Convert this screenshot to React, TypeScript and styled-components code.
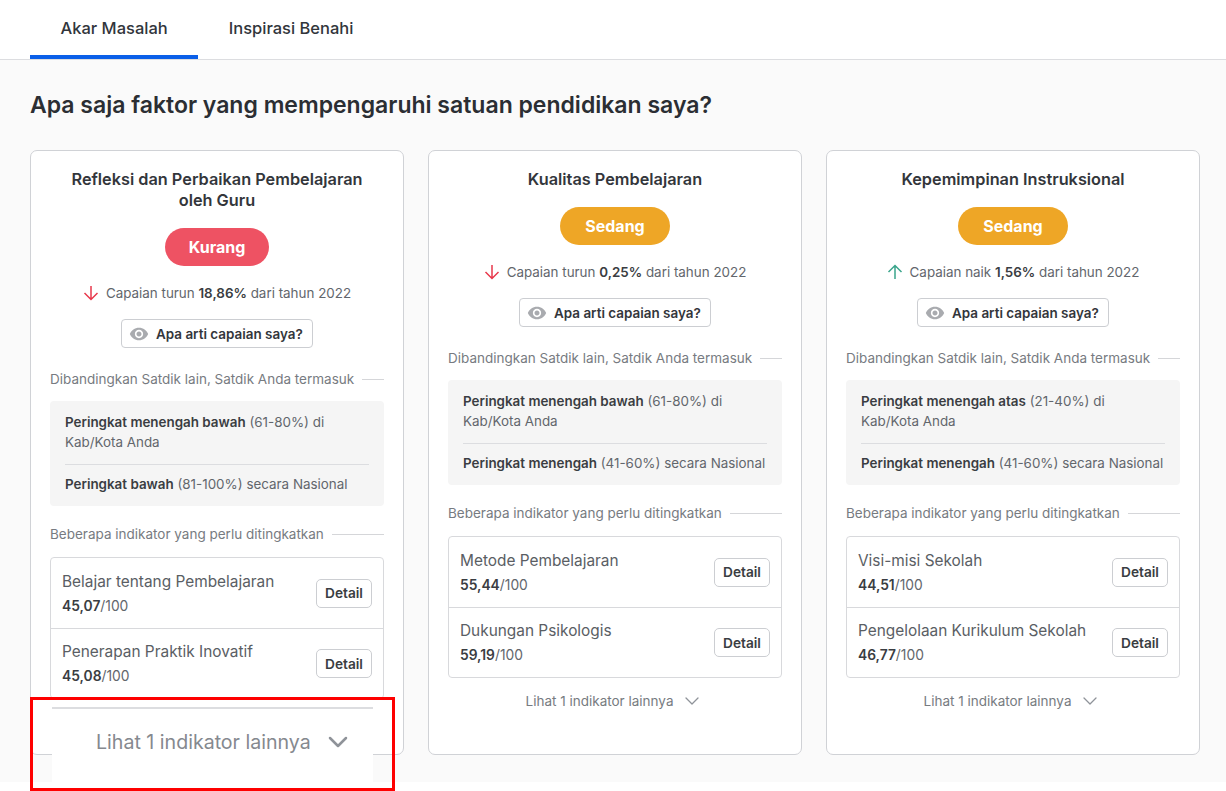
import React from "react";
import styled, { createGlobalStyle } from "styled-components";
import { ChevronDown } from "lucide-react";

const GlobalStyle = createGlobalStyle`
  html, body {
    margin: 0;
    padding: 0;
    background: #fff;
    font-family: Inter, "Noto Sans", sans-serif;
    color: #33363b;
  }
  * {
    box-sizing: border-box;
  }
`;

const Page = styled.div`
  position: relative;
  width: 1226px;
  height: 791px;
  overflow: hidden;
`;

const TabBar = styled.div`
  display: flex;
  height: 60px;
  padding-left: 30px;
  background: #fff;
  border-bottom: 1px solid #dcdde0;
`;

const Tab = styled.div<{ $active?: boolean }>`
  height: 59px;
  padding: 0 30.5px;
  display: flex;
  align-items: center;
  font-size: 16.5px;
  font-weight: 500;
  color: #31353b;
  border-bottom: 4px solid ${(props) => (props.$active ? "#0b5fe8" : "transparent")};
  border-radius: 2px 2px 0 0;
`;

const Main = styled.div`
  height: 722px;
  padding: 30px 26px 0 30px;
  background: #fafafa;
`;

const Heading = styled.h1`
  margin: 0 0 29px;
  font-size: 23px;
  line-height: 31px;
  font-weight: 600;
  color: #2b2e33;
`;

const Cards = styled.div`
  display: grid;
  grid-template-columns: repeat(3, 374px);
  gap: 24px;
`;

const Card = styled.div`
  height: 605px;
  padding: 18px 19px 0;
  background: #fff;
  border: 1px solid #d0d2d6;
  border-radius: 7px;
  overflow: hidden;
  display: flex;
  flex-direction: column;
`;

const CardTitle = styled.h2`
  margin: 0 auto 17px;
  max-width: 310px;
  font-size: 16.3px;
  line-height: 21px;
  font-weight: 600;
  text-align: center;
  color: #33363b;
`;

const Badge = styled.div<{ $tone: string }>`
  align-self: center;
  width: ${(props) => (props.$tone === "red" ? "104px" : "110px")};
  height: 38px;
  border-radius: 20px;
  display: flex;
  align-items: center;
  justify-content: center;
  background: ${(props) => (props.$tone === "red" ? "#ee5263" : "#eea626")};
  color: #fff;
  font-size: 16px;
  font-weight: 700;
`;

const Trend = styled.div`
  margin-top: 17px;
  display: flex;
  align-items: center;
  justify-content: center;
  gap: 7px;
  height: 20px;
  font-size: 13.4px;
  color: #62666c;
  b {
    font-weight: 600;
    color: #3a3d42;
  }
`;

const InfoButton = styled.div`
  align-self: center;
  margin-top: 16px;
  height: 29px;
  width: 192px;
  padding-left: 7px;
  display: flex;
  align-items: center;
  gap: 7px;
  background: #fff;
  border: 1px solid #ccced2;
  border-radius: 4px;
  font-size: 13.45px;
  font-weight: 600;
  color: #33363b;
  white-space: nowrap;
`;

const SectionLabel = styled.div<{ $gap: number }>`
  margin-top: ${(props) => props.$gap}px;
  display: flex;
  align-items: center;
  gap: 8px;
  height: 20px;
  font-size: 13.5px;
  color: #777b81;
  white-space: nowrap;
  &::after {
    content: "";
    flex: 1;
    height: 1px;
    background: #d5d6d9;
  }
`;

const RankBox = styled.div`
  margin-top: 12px;
  height: 105px;
  padding: 12px 15px 0;
  background: #f5f5f5;
  border-radius: 4px;
  font-size: 13.4px;
  line-height: 19.5px;
  color: #62666c;
  b {
    font-weight: 600;
    color: #3a3d42;
  }
`;

const RankRow = styled.div`
  & + & {
    margin-top: 12px;
    padding-top: 10px;
    border-top: 1px solid #dcdde0;
  }
`;

const IndicatorList = styled.div`
  margin-top: 13px;
  border: 1px solid #d8d9dc;
  border-radius: 4px;
`;

const Indicator = styled.div`
  height: 70px;
  padding: 0 11px;
  display: flex;
  align-items: center;
  justify-content: space-between;
  & + & {
    border-top: 1px solid #d8d9dc;
  }
`;

const IndicatorName = styled.div`
  font-size: 15.4px;
  line-height: 22px;
  color: #5a5e64;
`;

const IndicatorScore = styled.div`
  margin-top: 3px;
  font-size: 13.8px;
  line-height: 20px;
  color: #62666c;
  b {
    font-weight: 600;
    color: #3a3d42;
  }
`;

const DetailButton = styled.div`
  width: 56px;
  height: 29px;
  display: flex;
  align-items: center;
  justify-content: center;
  border: 1px solid #ccced2;
  border-radius: 5px;
  font-size: 13.7px;
  font-weight: 600;
  color: #3a3d42;
`;

const MoreRow = styled.div`
  margin-top: 13px;
  display: flex;
  align-items: center;
  justify-content: center;
  gap: 7px;
  height: 20px;
  font-size: 13.5px;
  color: #777b81;
`;

/* the zoomed-in callout pasted over the first card */
const Callout = styled.div`
  position: absolute;
  left: 30px;
  top: 697px;
  width: 365px;
  height: 94px;
  border: 3px solid #fe0000;
`;

const CalloutPatch = styled.div`
  position: absolute;
  left: 19px;
  top: 0;
  width: 321px;
  height: 82px;
  padding-top: 7px;
  background: #fff;
`;

const CalloutLine = styled.div`
  height: 2px;
  background: #dcdde0;
`;

const CalloutText = styled.div`
  margin-top: 20px;
  padding-left: 44px;
  display: flex;
  align-items: center;
  gap: 11px;
  height: 26px;
  font-size: 19.6px;
  line-height: 26px;
  color: #85898f;
`;

function EyeIcon() {
  return (
    <svg width="20" height="20" viewBox="0 0 24 24" fill="#a9abaf">
      <path d="M12 4.5C7 4.5 2.73 7.61 1 12c1.73 4.39 6 7.5 11 7.5s9.27-3.11 11-7.5c-1.73-4.39-6-7.5-11-7.5zM12 17c-2.76 0-5-2.24-5-5s2.24-5 5-5 5 2.24 5 5-2.24 5-5 5zm0-8c-1.66 0-3 1.34-3 3s1.34 3 3 3 3-1.34 3-3-1.34-3-3-3z" />
    </svg>
  );
}

function TrendArrow({ up }: { up: boolean }) {
  return (
    <svg width="16" height="16" viewBox="0 0 16 16" fill="none" stroke={up ? "#3ba58c" : "#e8384c"} strokeWidth="1.5">
      {up ? <path d="M8 15V2M1.5 8L8 1.5 14.5 8" /> : <path d="M8 1v13M1.5 8L8 14.5 14.5 8" />}
    </svg>
  );
}

interface CardData {
  title: string;
  level: string;
  tone: string;
  up: boolean;
  change: string;
  rankLocal: string;
  rangeLocal: string;
  rankNational: string;
  rangeNational: string;
  indicators: { name: string; score: string }[];
}

const cards: CardData[] = [
  {
    title: "Refleksi dan Perbaikan Pembelajaran oleh Guru",
    level: "Kurang",
    tone: "red",
    up: false,
    change: "18,86%",
    rankLocal: "Peringkat menengah bawah",
    rangeLocal: "(61-80%)",
    rankNational: "Peringkat bawah",
    rangeNational: "(81-100%)",
    indicators: [
      { name: "Belajar tentang Pembelajaran", score: "45,07" },
      { name: "Penerapan Praktik Inovatif", score: "45,08" },
    ],
  },
  {
    title: "Kualitas Pembelajaran",
    level: "Sedang",
    tone: "orange",
    up: false,
    change: "0,25%",
    rankLocal: "Peringkat menengah bawah",
    rangeLocal: "(61-80%)",
    rankNational: "Peringkat menengah",
    rangeNational: "(41-60%)",
    indicators: [
      { name: "Metode Pembelajaran", score: "55,44" },
      { name: "Dukungan Psikologis", score: "59,19" },
    ],
  },
  {
    title: "Kepemimpinan Instruksional",
    level: "Sedang",
    tone: "orange",
    up: true,
    change: "1,56%",
    rankLocal: "Peringkat menengah atas",
    rangeLocal: "(21-40%)",
    rankNational: "Peringkat menengah",
    rangeNational: "(41-60%)",
    indicators: [
      { name: "Visi-misi Sekolah", score: "44,51" },
      { name: "Pengelolaan Kurikulum Sekolah", score: "46,77" },
    ],
  },
];

function App() {
  return (
    <Page>
      <GlobalStyle />
      <TabBar>
        <Tab $active>Akar Masalah</Tab>
        <Tab>Inspirasi Benahi</Tab>
      </TabBar>
      <Main>
        <Heading>Apa saja faktor yang mempengaruhi satuan pendidikan saya?</Heading>
        <Cards>
          {cards.map((card) => (
            <Card key={card.title}>
              <CardTitle>{card.title}</CardTitle>
              <Badge $tone={card.tone}>{card.level}</Badge>
              <Trend>
                <TrendArrow up={card.up} />
                <span>
                  Capaian {card.up ? "naik" : "turun"} <b>{card.change}</b> dari tahun 2022
                </span>
              </Trend>
              <InfoButton>
                <EyeIcon />
                Apa arti capaian saya?
              </InfoButton>
              <SectionLabel $gap={21}>Dibandingkan Satdik lain, Satdik Anda termasuk</SectionLabel>
              <RankBox>
                <RankRow>
                  <b>{card.rankLocal}</b> {card.rangeLocal} di
                  <br />
                  Kab/Kota Anda
                </RankRow>
                <RankRow>
                  <b>{card.rankNational}</b> {card.rangeNational} secara Nasional
                </RankRow>
              </RankBox>
              <SectionLabel $gap={18}>Beberapa indikator yang perlu ditingkatkan</SectionLabel>
              <IndicatorList>
                {card.indicators.map((item) => (
                  <Indicator key={item.name}>
                    <div>
                      <IndicatorName>{item.name}</IndicatorName>
                      <IndicatorScore>
                        <b>{item.score}</b>/100
                      </IndicatorScore>
                    </div>
                    <DetailButton>Detail</DetailButton>
                  </Indicator>
                ))}
              </IndicatorList>
              <MoreRow>
                Lihat 1 indikator lainnya
                <ChevronDown size={24} color="#8f9399" strokeWidth={1.3} />
              </MoreRow>
            </Card>
          ))}
        </Cards>
      </Main>
      <Callout>
        <CalloutPatch>
          <CalloutLine />
          <CalloutText>
            Lihat 1 indikator lainnya
            <ChevronDown size={32} color="#8f9399" strokeWidth={1.9} />
          </CalloutText>
        </CalloutPatch>
      </Callout>
    </Page>
  );
}

export default App;
